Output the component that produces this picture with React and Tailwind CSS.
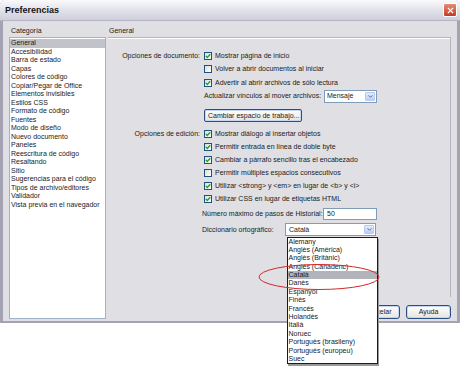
const categories = [
  "General",
  "Accesibilidad",
  "Barra de estado",
  "Capas",
  "Colores de código",
  "Copiar/Pegar de Office",
  "Elementos invisibles",
  "Estilos CSS",
  "Formato de código",
  "Fuentes",
  "Modo de diseño",
  "Nuevo documento",
  "Paneles",
  "Reescritura de código",
  "Resaltando",
  "Sitio",
  "Sugerencias para el código",
  "Tipos de archivo/editores",
  "Validador",
  "Vista previa en el navegador",
];

const languages = [
  "Alemany",
  "Anglès (Amèrica)",
  "Anglès (Britànic)",
  "Anglès (Canadenc)",
  "Català",
  "Danès",
  "Espanyol",
  "Finès",
  "Francès",
  "Holandès",
  "Italià",
  "Noruec",
  "Portuguès (brasileny)",
  "Portuguès (europeu)",
  "Suec",
];

const docOptions = [
  { text: "Mostrar página de inicio", on: true },
  { text: "Volver a abrir documentos al iniciar", on: false },
  { text: "Advertir al abrir archivos de sólo lectura", on: true },
];

const editOptions = [
  { text: "Mostrar diálogo al insertar objetos", on: true },
  { text: "Permitir entrada en línea de doble byte", on: true },
  { text: "Cambiar a párrafo sencillo tras el encabezado", on: true },
  { text: "Permitir múltiples espacios consecutivos", on: false },
  { text: "Utilizar <strong> y <em> en lugar de <b> y <i>", on: true },
  { text: "Utilizar CSS en lugar de etiquetas HTML", on: true },
];

function Check({ on }) {
  return (
    <span className="flex h-[8px] w-[8px] shrink-0 items-center justify-center border border-[#1c5180] bg-linear-to-br from-[#dcdcd7] to-white">
      {on ? (
        <svg viewBox="0 0 8 8" className="h-[6px] w-[6px]">
          <path d="M1 3.8 L3 6 L7 1.6" fill="none" stroke="#21a121" strokeWidth="1.7" />
        </svg>
      ) : null}
    </span>
  );
}

function Arrow() {
  return (
    <span className="flex h-full w-[10px] items-center justify-center rounded-[1px] border border-[#b9c9ef] bg-linear-to-b from-[#e3ebfd] to-[#bccdf5]">
      <svg viewBox="0 0 6 4" className="h-[3px] w-[5px]">
        <path d="M0.5 0.5 L3 3 L5.5 0.5" fill="none" stroke="#4d6185" strokeWidth="1.2" />
      </svg>
    </span>
  );
}

function Row({ label, children, className = "h-[13.5px]" }) {
  return (
    <div className={`flex items-center ${className}`}>
      <div className="w-[93px] shrink-0 pr-[1px] text-right">{label}</div>
      <div className="ml-[3px] flex items-center gap-[3px]">{children}</div>
    </div>
  );
}

function XpButton({ children }) {
  return (
    <div className="flex h-[14px] w-[45px] items-center justify-center rounded-[3px] border border-[#2a4f84] bg-linear-to-b from-white to-[#e6e5e0] shadow-[inset_0_0_0_1px_#c6d5f4]">
      {children}
    </div>
  );
}

export default function App() {
  return (
    <div className="relative h-[367px] w-[460px] overflow-hidden bg-white font-['Liberation_Sans',Arial,sans-serif] text-[7px] leading-[8px] text-[#1a1a1a]">
      <div className="flex h-[323px] w-[460px] flex-col rounded-t-[5px] border-x-[3px] border-b-[2px] border-[#a3a3b4] bg-[#e0dfe3]">
        <div className="-mx-[3px] flex h-[21px] shrink-0 items-center justify-between rounded-t-[5px] border-b border-[#b4b4c4] bg-linear-to-b from-[#fbfbfd] via-[#e2e2ea] to-[#cfcfdc] pl-[5px] pr-[3px]">
          <span className="text-[9px] font-bold text-[#151515]">Preferencias</span>
          <span className="flex h-[14px] w-[14px] items-center justify-center rounded-[2px] border border-white bg-linear-to-b from-[#e58a70] to-[#c2391d]">
            <svg viewBox="0 0 8 8" className="h-[7px] w-[7px]">
              <path d="M1 1 L7 7 M7 1 L1 7" stroke="white" strokeWidth="1.6" />
            </svg>
          </span>
        </div>

        <div className="flex min-h-0 flex-1 pl-[6px] pr-[6px]">
          <div className="flex w-[97px] shrink-0 flex-col">
            <div className="h-[16px] pl-[2px] pt-[6px]">Categoría</div>
            <div className="h-[282px] border border-[#9fb2c8] bg-white pt-[1px]">
              {categories.map((c, i) => (
                <div
                  key={c}
                  className={`h-[8.5px] whitespace-nowrap pl-[1px] leading-[8.5px] ${i === 0 ? "bg-[#c2c2ca]" : ""}`}
                >
                  {c}
                </div>
              ))}
            </div>
          </div>

          <div className="ml-[2px] flex flex-1 flex-col pb-[2px]">
            <div className="h-[17px] border-b border-[#b5b5c2] pl-[1px] pt-[6px] shadow-[0_1px_0_white]">General</div>
            <div className="flex flex-1 flex-col border-r border-[#b5b5c2]">
              <div className="mt-[11px]">
                {docOptions.map((o, i) => (
                  <Row key={o.text} label={i === 0 ? "Opciones de documento:" : ""}>
                    <Check on={o.on} />
                    <span className="whitespace-nowrap">{o.text}</span>
                  </Row>
                ))}
                <Row label="">
                  <span className="w-[117px] whitespace-nowrap">Actualizar vínculos al mover archivos:</span>
                  <div className="flex h-[13px] w-[53px] items-center border border-[#7f9db9] bg-white p-[1px]">
                    <span className="flex-1 pl-[1px]">Mensaje</span>
                    <Arrow />
                  </div>
                </Row>
                <Row label="" className="mt-[6px] h-[13px]">
                  <div className="flex h-[13px] w-[98px] items-center rounded-[2px] border border-[#2a4f84] bg-linear-to-b from-white to-[#e6e5e0] pl-[3px] shadow-[inset_0_0_0_1px_#c6d5f4]">
                    Cambiar espacio de trabajo...
                  </div>
                </Row>
              </div>

              <div className="mt-[6px]">
                {editOptions.map((o, i) => (
                  <Row key={o.text} label={i === 0 ? "Opciones de edición:" : ""} className="h-[12.85px]">
                    <Check on={o.on} />
                    <span className="whitespace-nowrap">{o.text}</span>
                  </Row>
                ))}
                <Row label="" className="mt-[2px] h-[13px]">
                  <span className="-ml-[2px] w-[118px] whitespace-nowrap">Número máximo de pasos de Historial:</span>
                  <div className="flex h-[12px] w-[54px] items-center border border-[#7f9db9] bg-white pl-[3px]">50</div>
                </Row>
                <Row label="" className="mt-[3px] h-[13px]">
                  <span className="-ml-[2px] w-[80px] whitespace-nowrap">Diccionario ortográfico:</span>
                  <div className="flex h-[13px] w-[91px] items-center border border-[#7f9db9] bg-white p-[1px]">
                    <span className="flex-1 pl-[2px]">Català</span>
                    <Arrow />
                  </div>
                </Row>
              </div>
            </div>

            <div className="flex justify-end gap-[6px] pt-[8px]">
              <XpButton />
              <XpButton>Cancelar</XpButton>
              <XpButton>Ayuda</XpButton>
            </div>
          </div>
        </div>
      </div>

      <div className="absolute left-[286.5px] top-[236.5px] h-[127px] w-[91px] border border-[#1a1a1a] bg-white shadow-[1px_2px_0_#9a9a9a]">
        {languages.map((l) => (
          <div
            key={l}
            className={`h-[8.4px] whitespace-nowrap pl-[1px] leading-[8.4px] ${l === "Català" ? "bg-[#b3b3bb]" : ""}`}
          >
            {l}
          </div>
        ))}
      </div>

      <svg className="absolute left-[257px] top-[263px] h-[29px] w-[124px]" viewBox="0 0 124 29">
        <ellipse cx="62" cy="14" rx="60" ry="12.5" fill="none" stroke="#d02a2a" strokeWidth="1" />
      </svg>
    </div>
  );
}
